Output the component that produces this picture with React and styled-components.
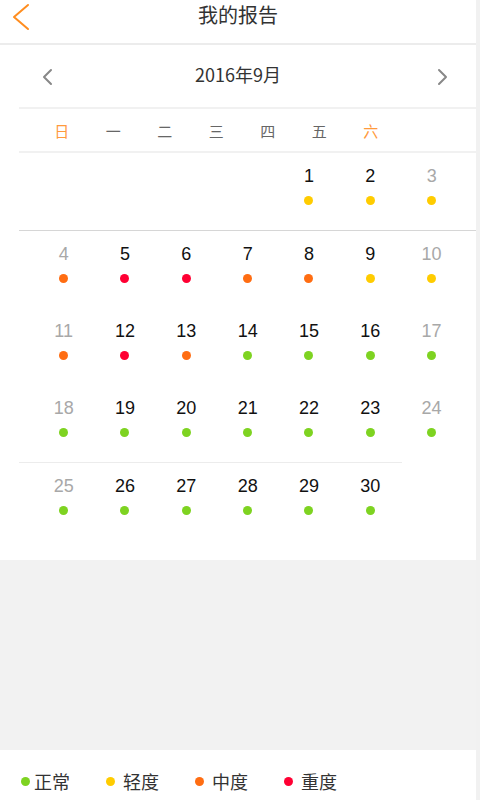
import React from 'react'
import styled, { createGlobalStyle } from 'styled-components'

const GlobalStyle = createGlobalStyle`
  html, body {
    margin: 0;
    padding: 0;
    background: #f1f1f1;
  }
  body {
    font-family: "Liberation Sans", "Noto Sans CJK SC", sans-serif;
  }
`

const COLORS = {
  normal: '#7ed321',
  light: '#ffcc00',
  medium: '#ff6d12',
  severe: '#ff0033',
}

// September 2016 starts on Thursday
const LEVELS = [
  'light', 'light', 'light',
  'medium', 'severe', 'severe', 'medium', 'medium', 'light', 'light',
  'medium', 'severe', 'medium', 'normal', 'normal', 'normal', 'normal',
  'normal', 'normal', 'normal', 'normal', 'normal', 'normal', 'normal',
  'normal', 'normal', 'normal', 'normal', 'normal', 'normal',
]

const buildWeeks = () => {
  const cells = [null, null, null, null]
  for (let d = 1; d <= 30; d++) cells.push(d)
  const weeks = []
  for (let i = 0; i < cells.length; i += 7) weeks.push(cells.slice(i, i + 7))
  return weeks
}

const WEEKDAYS = ['日', '一', '二', '三', '四', '五', '六']

const LEGEND = [
  { key: 'normal', label: '正常' },
  { key: 'light', label: '轻度' },
  { key: 'medium', label: '中度' },
  { key: 'severe', label: '重度' },
]

const App = () => {
  const weeks = buildWeeks()
  return (
    <>
      <GlobalStyle />
      <Page>
        <Header>
          <BackButton>
            <svg width="18" height="28" viewBox="0 0 18 28">
              <polyline points="16,2 2,14 16,26" fill="none" stroke="#ff8d1f" strokeWidth="2" strokeLinecap="round" strokeLinejoin="round" />
            </svg>
          </BackButton>
          <Title>我的报告</Title>
        </Header>

        <MonthBar>
          <Arrow>
            <svg width="12" height="18" viewBox="0 0 12 18">
              <polyline points="10,2 3,9 10,16" fill="none" stroke="#888" strokeWidth="2" strokeLinecap="round" strokeLinejoin="round" />
            </svg>
          </Arrow>
          <MonthTitle>2016年9月</MonthTitle>
          <Arrow>
            <svg width="12" height="18" viewBox="0 0 12 18">
              <polyline points="2,2 9,9 2,16" fill="none" stroke="#888" strokeWidth="2" strokeLinecap="round" strokeLinejoin="round" />
            </svg>
          </Arrow>
        </MonthBar>

        <Calendar>
          <WeekdayRow>
            {WEEKDAYS.map((w, i) => (
              <Weekday key={w} $weekend={i === 0 || i === 6}>{w}</Weekday>
            ))}
          </WeekdayRow>

          {weeks.map((week, wi) => (
            <React.Fragment key={wi}>
              {wi === 4 && <Divider $width="383px" />}
              <WeekRow>
                {week.map((day, i) => (
                  <DayCell key={i}>
                    {day && (
                      <>
                        <DayNum $weekend={i === 0 || i === 6}>{day}</DayNum>
                        <Dot $color={COLORS[LEVELS[day - 1]]} />
                      </>
                    )}
                  </DayCell>
                ))}
              </WeekRow>
              {wi === 0 && <Divider $dark />}
            </React.Fragment>
          ))}
        </Calendar>

        <Filler />

        <Legend>
          {LEGEND.map((item, i) => (
            <LegendItem key={item.key} $gap={i === 0 ? 4 : 8}>
              <Dot $color={COLORS[item.key]} $flat />
              <LegendText>{item.label}</LegendText>
            </LegendItem>
          ))}
        </Legend>
      </Page>
    </>
  )
}

export default App

const Page = styled.div`
  width: 476px;
  height: 100vh;
  display: flex;
  flex-direction: column;
  background: #fff;
`

const Header = styled.header`
  position: relative;
  height: 45px;
  flex-shrink: 0;
  display: flex;
  align-items: center;
  justify-content: center;
  border-bottom: 2px solid #ececec;
  box-sizing: border-box;
`

const BackButton = styled.div`
  position: absolute;
  left: 12px;
  top: 3px;
  height: 28px;
`

const Title = styled.h1`
  margin: 0 0 14px;
  font-size: 20px;
  font-weight: normal;
  color: #333;
  font-family: "Noto Sans CJK SC", sans-serif;
`

const MonthBar = styled.div`
  height: 62px;
  flex-shrink: 0;
  display: flex;
  align-items: center;
  justify-content: space-between;
  padding: 0 27px 0 41px;
  box-sizing: border-box;
`

const Arrow = styled.div`
  width: 12px;
  height: 18px;
  margin-top: 2px;
`

const MonthTitle = styled.div`
  font-size: 18px;
  color: #333;
  font-family: "Noto Sans CJK SC", sans-serif;
  margin: 0 14px 4px 0;
`

const Calendar = styled.section`
  margin-left: 19px;
  padding-bottom: 20px;
`

const WeekdayRow = styled.div`
  display: grid;
  grid-template-columns: repeat(7, 51.5px);
  padding-left: 17px;
  height: 46px;
  align-items: center;
  border-top: 2px solid #f1f1f1;
  border-bottom: 2px solid #f1f1f1;
  box-sizing: border-box;
`

const Weekday = styled.div`
  text-align: center;
  font-size: 15px;
  color: ${(p) => (p.$weekend ? '#ff9a3c' : '#666')};
  font-family: "Noto Sans CJK SC", sans-serif;
`

const WeekRow = styled.div`
  display: grid;
  grid-template-columns: repeat(7, 61.33px);
  padding-left: 14px;
  height: 77px;
`

const DayCell = styled.div`
  display: flex;
  flex-direction: column;
  align-items: center;
  padding-top: 13px;
  box-sizing: border-box;
`

const DayNum = styled.div`
  font-size: 18px;
  line-height: 20px;
  color: ${(p) => (p.$weekend ? '#a8a8a8' : '#111')};
`

const Dot = styled.span`
  display: block;
  flex-shrink: 0;
  width: 9px;
  height: 9px;
  border-radius: 50%;
  background: ${(p) => p.$color};
  margin-top: ${(p) => (p.$flat ? '0' : '10px')};
`

const Divider = styled.div`
  height: 1px;
  width: ${(p) => p.$width || 'auto'};
  background: ${(p) => (p.$dark ? '#d6d6d6' : '#ececec')};
`

const Filler = styled.div`
  flex: 1;
  background: #f2f2f2;
`

const Legend = styled.footer`
  height: 50px;
  flex-shrink: 0;
  display: flex;
  align-items: center;
  padding: 12px 0 0 21px;
  box-sizing: border-box;
  gap: 36px;
`

const LegendItem = styled.div`
  display: flex;
  align-items: center;
  gap: ${(p) => p.$gap}px;
`

const LegendText = styled.span`
  font-size: 18px;
  color: #333;
  font-family: "Noto Sans CJK SC", sans-serif;
`
